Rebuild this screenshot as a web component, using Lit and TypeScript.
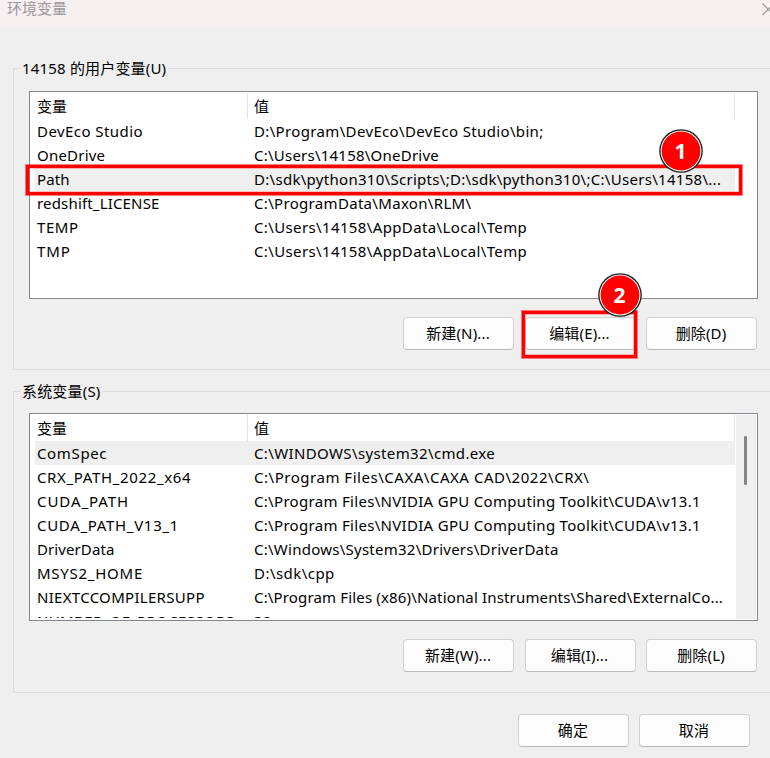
import { LitElement, html, css, svg, nothing } from "lit";
import { customElement, property } from "lit/decorators.js";
import { classMap } from "lit/directives/class-map.js";
import { styleMap } from "lit/directives/style-map.js";

// Each entry carries its name and value with the advance width of the text.
interface Cell {
  text: string;
  width: number;
}
interface Variable {
  name: Cell;
  value: Cell;
}

const variable = (name: string, nameWidth: number, value: string, valueWidth: number): Variable => ({
  name: { text: name, width: nameWidth },
  value: { text: value, width: valueWidth },
});

const USER_VARIABLES: Variable[] = [
  variable("DevEco Studio", 106, "D:\\Program\\DevEco\\DevEco Studio\\bin;", 289.6),
  variable("OneDrive", 68.2, "C:\\Users\\14158\\OneDrive", 185),
  variable("Path", 32.6, "D:\\sdk\\python310\\Scripts\\;D:\\sdk\\python310\\;C:\\Users\\14158\\...", 467.2),
  variable("redshift_LICENSE", 122.6, "C:\\ProgramData\\Maxon\\RLM\\", 217.4),
  variable("TEMP", 41.6, "C:\\Users\\14158\\AppData\\Local\\Temp", 273.2),
  variable("TMP", 33.6, "C:\\Users\\14158\\AppData\\Local\\Temp", 273.2),
];

const SYSTEM_VARIABLES: Variable[] = [
  variable("ComSpec", 70.2, "C:\\WINDOWS\\system32\\cmd.exe", 241.2),
  variable("CRX_PATH_2022_x64", 154.2, "C:\\Program Files\\CAXA\\CAXA CAD\\2022\\CRX\\", 335.4),
  variable("CUDA_PATH", 92, "C:\\Program Files\\NVIDIA GPU Computing Toolkit\\CUDA\\v13.1", 447),
  variable("CUDA_PATH_V13_1", 142, "C:\\Program Files\\NVIDIA GPU Computing Toolkit\\CUDA\\v13.1", 447),
  variable("DriverData", 77.4, "C:\\Windows\\System32\\Drivers\\DriverData", 304.6),
  variable("MSYS2_HOME", 106, "D:\\sdk\\cpp", 80.8),
  variable("NIEXTCCOMPILERSUPP", 167.8, "C:\\Program Files (x86)\\National Instruments\\Shared\\ExternalCo...", 469),
  variable("NUMBER_OF_PROCESSORS", 197.4, "32", 18),
];

const ruler = document.createElement("canvas").getContext("2d")!;

function tracking({ text, width }: Cell): string {
  ruler.font = '15px "Noto Sans"';
  return `${((width - ruler.measureText(text).width) / text.length).toFixed(3)}px`;
}

@customElement("dialog-button")
class DialogButton extends LitElement {
  static styles = css`
    :host {
      display: block;
      width: 111px;
      height: 33px;
    }
    .button {
      display: flex;
      align-items: center;
      justify-content: center;
      box-sizing: border-box;
      width: 100%;
      height: 100%;
      border: 1px solid #d0d0d0;
      border-bottom-color: #bababa;
      border-radius: 4px;
      background: #fdfdfd;
      color: #000;
      font: inherit;
      letter-spacing: 0.15px;
      padding: 0 1px 2px 0;
      white-space: nowrap;
    }
  `;
  render() {
    return html`<button class="button"><slot></slot></button>`;
  }
}

@customElement("step-badge")
class StepBadge extends LitElement {
  @property({ type: Number }) step = 1;
  static styles = css`
    :host {
      display: block;
      width: 44px;
      height: 44px;
    }
    .disc {
      display: block;
    }
    .digit {
      fill: #fff;
      font: 700 21px "Open Sans", "Noto Sans", sans-serif;
      text-anchor: middle;
    }
  `;
  render() {
    return html`<svg class="disc" width="44" height="44" viewBox="0 0 44 44">
      ${svg`<circle cx="22" cy="22" r="21.8" fill="#1a1a1a"></circle>
      <circle cx="22" cy="22" r="20.5" fill="#fff"></circle>
      <circle cx="22" cy="22" r="19.4" fill="#f00"></circle>
      <text class="digit" x="21.5" y="29.5">${this.step}</text>`}
    </svg>`;
  }
}

@customElement("variable-list")
class VariableList extends LitElement {
  @property({ attribute: false }) rows: Variable[] = [];
  @property({ type: Number }) selected = 0;
  @property({ type: Boolean }) scrollbar = false;
  static styles = css`
    :host {
      display: flex;
      gap: 1px;
      box-sizing: border-box;
      width: 729px;
      height: 208px;
      padding: 1px;
      border: 1px solid #828790;
      background: #fff;
    }
    .table {
      width: 704px;
      flex: none;
      height: 203px;
      overflow: hidden;
    }
    .head,
    .row {
      display: grid;
      grid-template-columns: 217px 487px;
      white-space: pre;
    }
    .head {
      height: 26px;
    }
    .head .cell {
      border-right: 1px solid #e3e3e3;
      line-height: 27px;
    }
    .row {
      height: 24px;
      line-height: 24px;
    }
    .cell {
      box-sizing: border-box;
      overflow: hidden;
      padding-left: 6px;
    }
    .row .cell:first-child {
      margin-left: 4px;
      padding-left: 2px;
    }
    .row.selected .cell {
      background: #efefef;
    }
    .track {
      box-sizing: border-box;
      width: 20px;
      height: 204px;
      padding: 21px 0 0 8px;
      background: #efefef;
    }
    .thumb {
      width: 3px;
      height: 49px;
      border-radius: 1px;
      background: #858585;
    }
  `;
  render() {
    return html`
      <div class="table">
        <div class="head"><div class="cell">变量</div><div class="cell">值</div></div>
        ${this.rows.map(
          (row, i) => html`<div class=${classMap({ row: true, selected: i === this.selected })}>${[row.name, row.value].map(
            (cell) => html`<div class="cell" style=${styleMap({ letterSpacing: tracking(cell) })}>${cell.text}</div>`
          )}</div>`
        )}
      </div>
      ${this.scrollbar ? html`<div class="track"><div class="thumb"></div></div>` : nothing}
    `;
  }
}

@customElement("app-root")
class AppRoot extends LitElement {
  static styles = css`
    :host {
      display: block;
      position: relative;
      width: 770px;
      height: 758px;
      overflow: hidden;
      background: #efefef;
      color: #000;
      font: 15px "Noto Sans", "Noto Sans CJK SC", sans-serif;
    }
    .titlebar {
      display: flex;
      justify-content: space-between;
      height: 28px;
      padding-left: 7px;
      background: #f7f0f1;
      color: #999;
      line-height: 17px;
    }
    .close {
      display: block;
      flex: none;
      margin-top: 3px;
    }
    .group {
      box-sizing: border-box;
      width: 775px;
      height: 302px;
      margin-left: 13px;
      border: 1px solid #dcdcdc;
      padding-left: 15px;
    }
    .user {
      margin-top: 40px;
    }
    .system {
      margin-top: 21px;
    }
    .legend {
      display: block;
      width: max-content;
      height: 22px;
      line-height: 22px;
      letter-spacing: 0.18px;
      margin: -12px 0 12px -9px;
      padding: 0 2px;
      background: #efefef;
    }
    .system .legend {
      margin-bottom: 11px;
    }
    .actions {
      display: grid;
      grid-template-columns: 111px 111px 111px;
      column-gap: 10.5px;
      margin: 18px 0 0 374px;
    }
    .footer {
      display: flex;
      gap: 10px;
      margin: 21px 0 0 518px;
    }
    .mark {
      position: absolute;
      box-sizing: border-box;
      border: 3px solid #f00;
      outline: 1px solid rgba(255, 0, 0, 0.5);
      box-shadow: inset 0 0 0 1px rgba(255, 0, 0, 0.25);
    }
    .mark-row {
      left: 26px;
      top: 165px;
      width: 716px;
      height: 30px;
    }
    .mark-edit {
      left: 522px;
      top: 311px;
      width: 115px;
      height: 46.5px;
    }
    .badge {
      position: absolute;
    }
    .badge-row {
      left: 659px;
      top: 129px;
    }
    .badge-edit {
      left: 597.5px;
      top: 273px;
    }
  `;
  render() {
    return html`
      <div class="titlebar">
        <span>环境变量</span>
        <svg class="close" width="8" height="13" viewBox="0 0 8 13" fill="none" stroke="#999" stroke-width="1.2">
          <path d="M0.5 0.5L12.5 12.5M0.5 12L12.5 0"></path>
        </svg>
      </div>
      <section class="group user">
        <span class="legend">14158 的用户变量(U)</span>
        <variable-list .rows=${USER_VARIABLES} .selected=${2}></variable-list>
        <div class="actions">
          <dialog-button>新建(N)...</dialog-button>
          <dialog-button>编辑(E)...</dialog-button>
          <dialog-button>删除(D)</dialog-button>
        </div>
      </section>
      <section class="group system">
        <span class="legend">系统变量(S)</span>
        <variable-list .rows=${SYSTEM_VARIABLES} .selected=${0} scrollbar></variable-list>
        <div class="actions">
          <dialog-button>新建(W)...</dialog-button>
          <dialog-button>编辑(I)...</dialog-button>
          <dialog-button>删除(L)</dialog-button>
        </div>
      </section>
      <div class="footer">
        <dialog-button>确定</dialog-button>
        <dialog-button>取消</dialog-button>
      </div>
      <div class="mark mark-row"></div>
      <div class="mark mark-edit"></div>
      <step-badge class="badge badge-row" .step=${1}></step-badge>
      <step-badge class="badge badge-edit" .step=${2}></step-badge>
    `;
  }
}
